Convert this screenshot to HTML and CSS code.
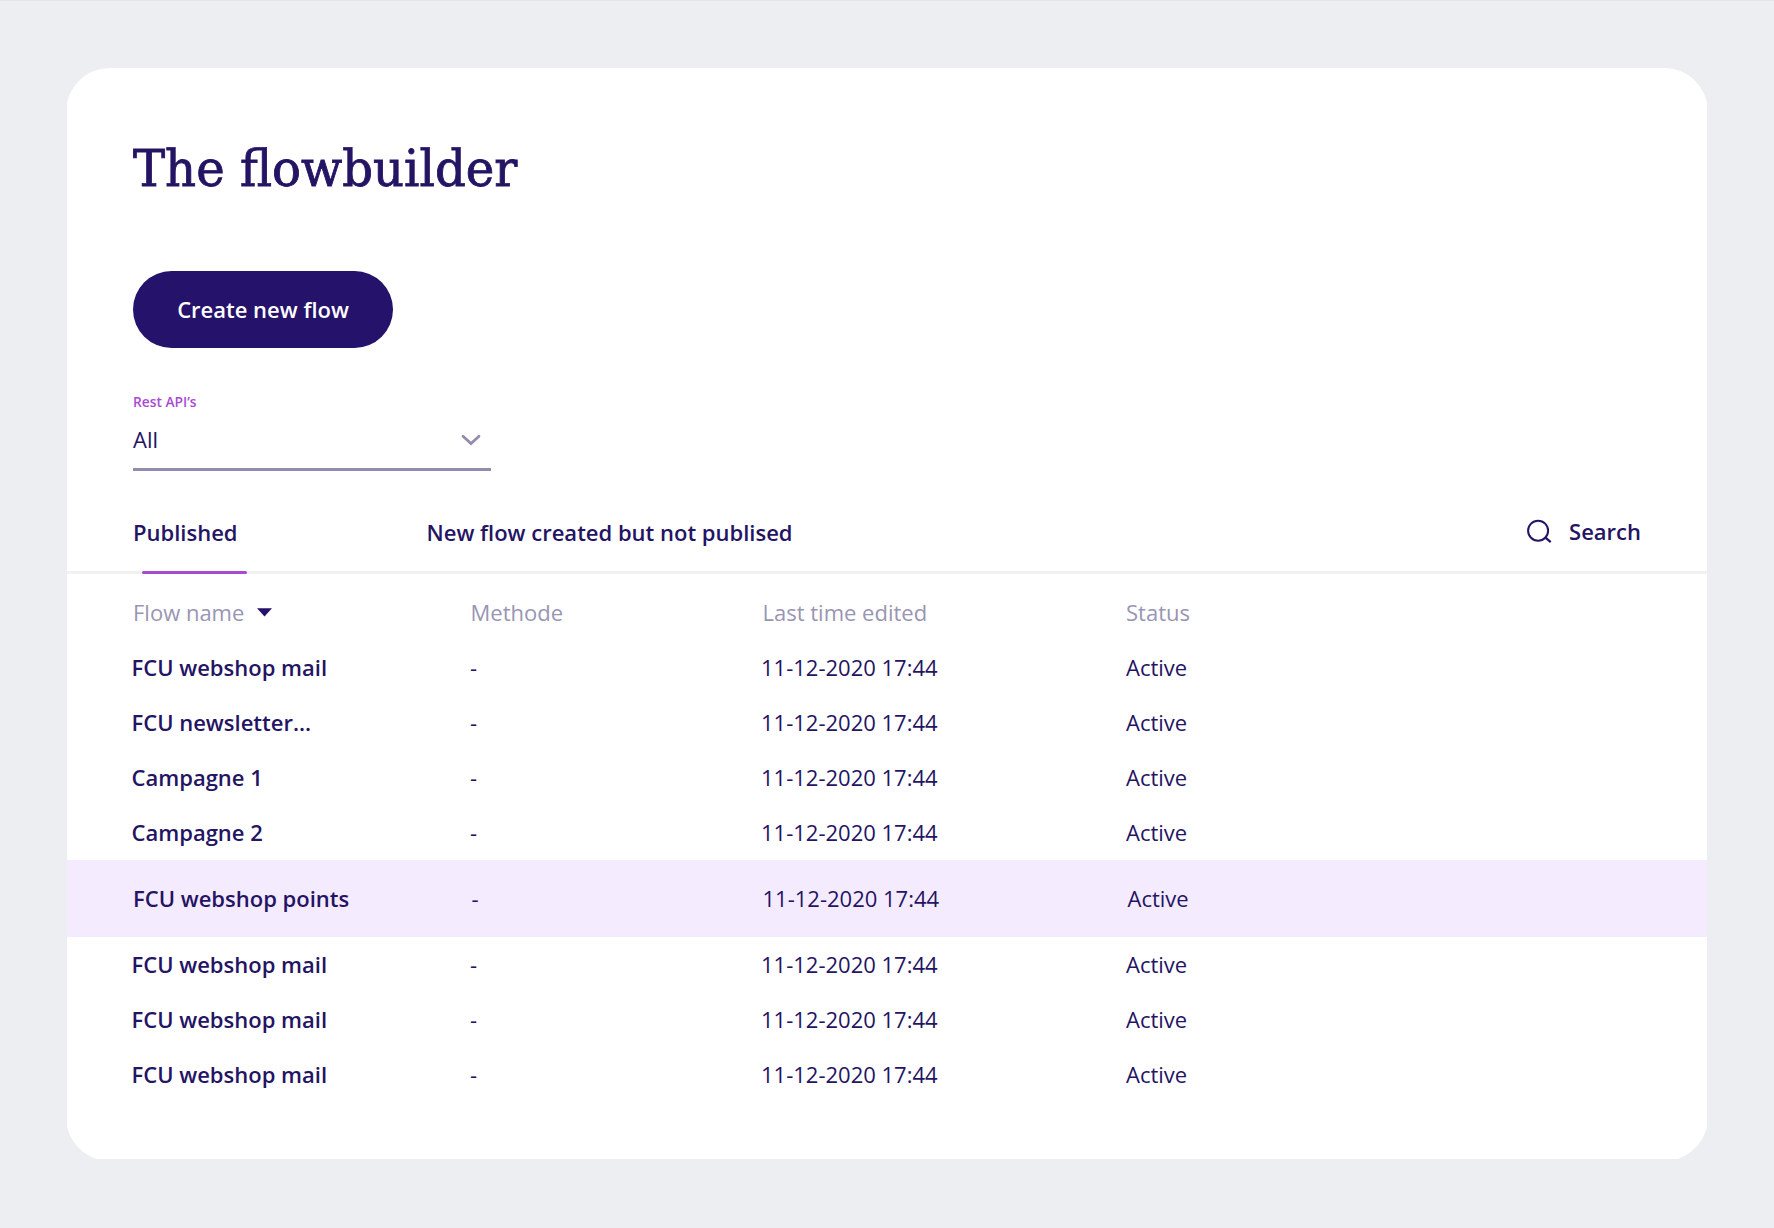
FILE: index.html
```html
<!DOCTYPE html>
<html lang="en">
<head>
<meta charset="utf-8">
<title>The flowbuilder</title>
<link rel="stylesheet" href="styles.css">
</head>
<body>
<main class="card">
  <h1 class="title">The flowbuilder</h1>
  <button class="create" type="button">Create new flow</button>
  <div class="filter">
    <span class="filter-label">Rest API’s</span>
    <div class="select">
      <span>All</span>
      <svg class="chevron" width="20" height="12" viewBox="0 0 20 12"><path d="M2 2.2 10 9.6 18 2.2" fill="none" stroke="currentColor" stroke-width="2.7" stroke-linecap="round" stroke-linejoin="miter"/></svg>
    </div>
  </div>
  <nav class="tabs">
    <a class="tab tab-active">Published</a>
    <a class="tab">New flow created but not publised</a>
    <a class="search">
      <svg width="26" height="24" viewBox="0 0 26 24" fill="none" stroke="currentColor" stroke-width="2"><circle cx="12.1" cy="11.7" r="10"/><path d="M18.9 18.1 24.7 23.1" stroke-width="2.3"/></svg>
      <span>Search</span>
    </a>
  </nav>
  <div class="table">
    <div class="row head"><span class="sort">Flow name <svg width="15" height="9" viewBox="0 0 15 9"><path d="M0 .3H15L7.5 8.5Z" fill="#25126a"/></svg></span><span>Methode</span><span>Last time edited</span><span>Status</span></div>
    <div class="row"><b>FCU webshop mail</b><span>-</span><span>11-12-2020 17:44</span><span>Active</span></div>
    <div class="row"><b>FCU newsletter...</b><span>-</span><span>11-12-2020 17:44</span><span>Active</span></div>
    <div class="row"><b>Campagne 1</b><span>-</span><span>11-12-2020 17:44</span><span>Active</span></div>
    <div class="row"><b>Campagne 2</b><span>-</span><span>11-12-2020 17:44</span><span>Active</span></div>
    <div class="row selected"><b>FCU webshop points</b><span>-</span><span>11-12-2020 17:44</span><span>Active</span></div>
    <div class="row"><b>FCU webshop mail</b><span>-</span><span>11-12-2020 17:44</span><span>Active</span></div>
    <div class="row"><b>FCU webshop mail</b><span>-</span><span>11-12-2020 17:44</span><span>Active</span></div>
    <div class="row"><b>FCU webshop mail</b><span>-</span><span>11-12-2020 17:44</span><span>Active</span></div>
  </div>
</main>
</body>
</html>
```
FILE: styles.css
```css
* { box-sizing: border-box; }
body {
  margin: 0;
  height: 1228px;
  padding: 67px 66px 0;
  border-top: 1px solid #e4e5e9;
  background: #edeef2;
  color: #241463;
  font: 400 22px/30px "Open Sans", sans-serif;
  overflow: hidden;
}
.card {
  display: flex;
  flex-direction: column;
  width: 1642px;
  height: 1093px;
  padding-top: 69px;
  border-radius: 44px;
  background: #fff;
  clip-path: inset(0 1px 2px 1px);
}
.title {
  align-self: flex-start;
  margin: 0 67px;
  height: 64px;
  font: 400 50px/64px "DejaVu Serif", serif;
  white-space: nowrap;
  -webkit-text-stroke: .9px currentColor;
  transform: scaleX(.963);
  transform-origin: left;
}
.create {
  width: 260px;
  height: 77px;
  margin: 70px 67px 0;
  padding: 0 0 2px;
  border: 0;
  border-radius: 39px;
  background: #25126a;
  color: #fff;
  font: 600 22px/30px "Open Sans", sans-serif;
}
.filter {
  width: 358px;
  margin: 44px 67px 0;
}
.filter-label {
  display: block;
  color: #a74bd4;
  font-size: 13.75px;
  font-weight: 600;
  line-height: 20px;
}
.select {
  display: flex;
  align-items: center;
  justify-content: space-between;
  height: 59px;
  padding: 0 10px 2px 0;
  border-bottom: 3px solid #938cae;
}
.chevron { margin-top: 2px; color: #938cae; }
.tabs {
  display: flex;
  align-items: center;
  height: 103px;
  padding: 21px 67px 0;
  border-bottom: 3px solid #f1f1f2;
  font-weight: 600;
}
.tab { position: relative; margin-right: 189px; }
.tab-active::after {
  content: "";
  position: absolute;
  left: 9px;
  bottom: -27px;
  width: 105px;
  height: 3px;
  border-radius: 2px;
  background: #a74bd4;
}
.search {
  display: flex;
  align-items: center;
  gap: 17px;
  margin-left: auto;
  padding-bottom: 2px;
}
.table { padding-top: 11px; }
.row {
  display: grid;
  grid-template-columns: 338.5px 291px 365px 1fr;
  align-items: center;
  height: 55px;
  padding: 0 65.5px 2px;
}
.row b { font-weight: 600; }
.head {
  grid-template-columns: 337.5px 292px 363.5px 1fr;
  padding-left: 67px;
  color: #9995b3;
}
.sort { display: flex; align-items: center; gap: 13px; }
.sort svg { margin-top: 2px; }
.selected {
  height: 77px;
  padding: 0 67px 2px;
  background: #f4ebff;
}
```
